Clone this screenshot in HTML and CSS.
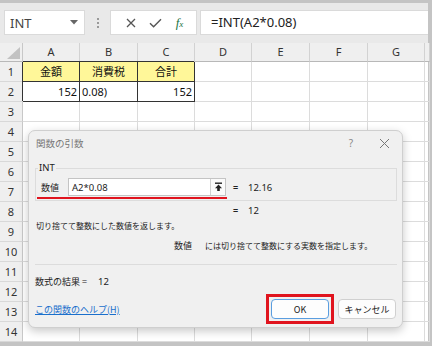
FILE: index.html
```html
<!DOCTYPE html>
<html lang="ja">
<head>
<meta charset="utf-8">
<link rel="stylesheet" href="styles.css">
</head>
<body>
<div class="app">
  <div class="toolbar">
    <div class="namebox"><span>INT</span>
      <svg class="dd" width="8" height="5" viewBox="0 0 8 5"><path d="M0 0h8L4 4.5z" fill="#666"/></svg>
    </div>
    <div class="grip"><i></i><i></i><i></i></div>
    <div class="fbtns">
      <svg width="10" height="10" viewBox="0 0 10 10"><path d="M1 1L9 9M9 1L1 9" stroke="#555" stroke-width="1.3" fill="none"/></svg>
      <svg width="13" height="10" viewBox="0 0 13 10"><path d="M1 5.2L4.6 8.8L12 1.2" stroke="#555" stroke-width="1.4" fill="none"/></svg>
      <span class="fx">f<span class="fxx">x</span></span>
    </div>
    <div class="formula">=INT(A2*0.08)</div>
  </div>
  <div class="sheet">
    <div class="corner"><span class="tri"></span></div><div class="ch">A</div><div class="ch">B</div><div class="ch">C</div><div class="ch">D</div><div class="ch">E</div><div class="ch">F</div><div class="ch">G</div><div class="ch"></div>
    <div class="rh">1</div><div class="c y b ctr">金額</div><div class="c y b ctr">消費税</div><div class="c y b ctr">合計</div><div class="c"></div><div class="c"></div><div class="c"></div><div class="c"></div><div class="c"></div>
    <div class="rh">2</div><div class="c b rt">152</div><div class="c b lt">0.08)</div><div class="c b rt">152</div><div class="c"></div><div class="c"></div><div class="c"></div><div class="c"></div><div class="c"></div>
    <div class="rh">3</div><div class="c"></div><div class="c"></div><div class="c"></div><div class="c"></div><div class="c"></div><div class="c"></div><div class="c"></div><div class="c"></div>
    <div class="rh">4</div><div class="c"></div><div class="c"></div><div class="c"></div><div class="c"></div><div class="c"></div><div class="c"></div><div class="c"></div><div class="c"></div>
    <div class="rh">5</div><div class="c"></div><div class="c"></div><div class="c"></div><div class="c"></div><div class="c"></div><div class="c"></div><div class="c"></div><div class="c"></div>
    <div class="rh">6</div><div class="c"></div><div class="c"></div><div class="c"></div><div class="c"></div><div class="c"></div><div class="c"></div><div class="c"></div><div class="c"></div>
    <div class="rh">7</div><div class="c"></div><div class="c"></div><div class="c"></div><div class="c"></div><div class="c"></div><div class="c"></div><div class="c"></div><div class="c"></div>
    <div class="rh">8</div><div class="c"></div><div class="c"></div><div class="c"></div><div class="c"></div><div class="c"></div><div class="c"></div><div class="c"></div><div class="c"></div>
    <div class="rh">9</div><div class="c"></div><div class="c"></div><div class="c"></div><div class="c"></div><div class="c"></div><div class="c"></div><div class="c"></div><div class="c"></div>
    <div class="rh">10</div><div class="c"></div><div class="c"></div><div class="c"></div><div class="c"></div><div class="c"></div><div class="c"></div><div class="c"></div><div class="c"></div>
    <div class="rh">11</div><div class="c"></div><div class="c"></div><div class="c"></div><div class="c"></div><div class="c"></div><div class="c"></div><div class="c"></div><div class="c"></div>
    <div class="rh">12</div><div class="c"></div><div class="c"></div><div class="c"></div><div class="c"></div><div class="c"></div><div class="c"></div><div class="c"></div><div class="c"></div>
    <div class="rh">13</div><div class="c"></div><div class="c"></div><div class="c"></div><div class="c"></div><div class="c"></div><div class="c"></div><div class="c"></div><div class="c"></div>
    <div class="rh">14</div><div class="c"></div><div class="c"></div><div class="c"></div><div class="c"></div><div class="c"></div><div class="c"></div><div class="c"></div><div class="c"></div>

    <div class="dialog">
      <div class="dlg-title">
        <span>関数の引数</span>
        <span class="help">?</span>
        <svg class="close" width="11" height="11" viewBox="0 0 11 11"><path d="M1 1L10 10M10 1L1 10" stroke="#777" stroke-width="1" fill="none"/></svg>
      </div>
      <fieldset class="group">
        <legend>INT</legend>
        <div class="argrow">
          <span class="arglabel">数値</span>
          <div class="arginput"><span class="argtext">A2*0.08</span>
            <span class="refbtn"><svg width="9" height="10" viewBox="0 0 9 10"><path d="M1 1.2h7" stroke="#222" stroke-width="1.4"/><path d="M4.5 2.5L1 6.2h2.2V9h2.6V6.2H8z" fill="#222"/></svg></span>
          </div>
          <span class="eq">=</span><span class="val">12.16</span>
        </div>
        <div class="redline"></div>
      </fieldset>
      <div class="resrow"><span class="eq">=</span><span class="val">12</span></div>
      <p class="desc">切り捨てて整数にした数値を返します。</p>
      <p class="argdesc"><span class="argname">数値</span>には切り捨てて整数にする実数を指定します。</p>
      <div class="sep"></div>
      <p class="result"><span>数式の結果 =</span><span class="resval">12</span></p>
      <div class="footer">
        <a class="helplink" href="#">この関数のヘルプ(H)</a>
        <div class="btns">
          <div class="mark"><button class="btn ok">OK</button></div>
          <button class="btn">キャンセル</button>
        </div>
      </div>
    </div>
  </div>
</div>
</body>
</html>
```
FILE: styles.css
```css
* { box-sizing: border-box; }
html, body { margin: 0; padding: 0; }
body {
  width: 432px;
  height: 346px;
  overflow: hidden;
  font-family: "Noto Sans", "Noto Sans CJK JP", sans-serif;
}
.app {
  width: 432px;
  height: 346px;
  background: #c4c4c4;
  padding: 3px 4px 4px 0;
  display: flex;
  flex-direction: column;
}
.toolbar {
  height: 40px;
  background: #e9e9e9;
  display: flex;
  align-items: flex-start;
  padding: 7px 0 0 4px;
}
.namebox {
  width: 81px;
  height: 25px;
  background: #fff;
  border: 1px solid #dadada;
  display: flex;
  align-items: center;
  justify-content: space-between;
  padding: 0 6px 0 5px;
  font-size: 13px;
  color: #444;
}
.grip {
  width: 25px;
  height: 25px;
  display: flex;
  flex-direction: column;
  align-items: center;
  justify-content: center;
  gap: 2px;
}
.grip i {
  display: block;
  width: 2px;
  height: 2px;
  background: #9a9a9a;
}
.fbtns {
  width: 87px;
  height: 25px;
  background: #fff;
  border: 1px solid #dadada;
  display: flex;
  align-items: center;
  justify-content: space-around;
  padding: 0 6px 0 8px;
}
.fx {
  font-family: "Liberation Serif", serif;
  font-style: italic;
  font-size: 13px;
  color: #217346;
  line-height: 1;
}
.fxx { font-size: 9px; }
.formula {
  flex: 1;
  margin-left: 3px;
  height: 25px;
  background: #fff;
  border: 1px solid #dadada;
  border-right: 0;
  font-size: 13px;
  line-height: 23px;
  padding-left: 10px;
  color: #222;
}
.sheet {
  position: relative;
  flex: 1;
  background: #fff;
  display: grid;
  grid-template-columns: 23px 57px 58px 57px 57px 58px 58px 57px 1fr;
  grid-template-rows: 19px repeat(14, 20px);
  font-family: "Noto Sans CJK JP", sans-serif;
  font-size: 11px;
}
.corner {
  background: #efefef;
  border-right: 1px solid #c8c8c8;
  border-bottom: 1px solid #b8b8b8;
  position: relative;
}
.tri {
  position: absolute;
  right: 2px;
  bottom: 2px;
  width: 0;
  height: 0;
  border-left: 13px solid transparent;
  border-bottom: 12px solid #c2c2c2;
}
.ch {
  background: #efefef;
  border-right: 1px solid #d2d2d2;
  border-bottom: 1px solid #b8b8b8;
  text-align: center;
  line-height: 18px;
  color: #333;
  font-family: "Noto Sans", sans-serif;
}
.rh {
  background: #efefef;
  border-right: 1px solid #c8c8c8;
  border-bottom: 1px solid #d8d8d8;
  text-align: center;
  line-height: 19px;
  color: #333;
  font-family: "Noto Sans", sans-serif;
}
.c {
  border-right: 1px solid #dcdcdc;
  border-bottom: 1px solid #dcdcdc;
  line-height: 19px;
  padding: 0 2px;
  color: #111;
  white-space: nowrap;
  overflow: hidden;
}
.y { background: #fff799; }
.b {
  border-right-color: #333;
  border-bottom-color: #333;
  box-shadow: -1px -1px 0 #333;
}
.ctr { text-align: center; }
.rt { text-align: right; font-family: "Noto Sans", sans-serif; }
.lt { text-align: left; font-family: "Noto Sans", sans-serif; }

.dialog {
  position: absolute;
  left: 28px;
  top: 87px;
  width: 375px;
  height: 198px;
  background: #f0f0f0;
  border: 1px solid #cfcfcf;
  border-radius: 7px;
  box-shadow: 0 3px 10px rgba(0,0,0,0.22);
  padding: 0 5px 0 6px;
  font-family: "Noto Sans CJK JP", sans-serif;
  font-size: 9px;
  color: #222;
  display: flex;
  flex-direction: column;
}
.dlg-title {
  height: 24px;
  display: flex;
  align-items: center;
  padding-left: 1px;
  font-size: 9.5px;
  color: #777;
}
.help {
  margin-left: auto;
  font-family: "Noto Sans", sans-serif;
  font-size: 10px;
  color: #888;
}
.close { margin: 0 7px 0 26px; }
.group {
  margin: 7px 0 0 0;
  border: 1px solid #dcdcdc;
  padding: 4px 5px 1px 5px;
  min-width: 0;
}
.group legend {
  padding: 0 1px;
  margin-left: -3px;
  font-family: "Noto Sans", sans-serif;
  font-size: 9.5px;
  line-height: 12px;
  color: #222;
}
.argrow {
  display: flex;
  align-items: center;
  height: 18px;
}
.arglabel { width: 27px; }
.arginput {
  width: 158px;
  height: 18px;
  background: #fff;
  border: 1px solid #c4c4c4;
  display: flex;
  align-items: center;
  justify-content: space-between;
  padding-left: 3px;
}
.argtext { font-family: "Noto Sans", sans-serif; font-size: 9.5px; }
.refbtn {
  width: 15px;
  height: 16px;
  border-left: 1px solid #d0d0d0;
  background: #fafafa;
  display: flex;
  align-items: center;
  justify-content: center;
}
.eq {
  margin-left: 7px;
  width: 15px;
  font-family: "Noto Sans", sans-serif;
  font-weight: bold;
  font-size: 9px;
}
.val { font-family: "Noto Sans", sans-serif; font-size: 9.5px; }
.redline {
  margin: 1px 0 0 -4px;
  width: 190px;
  height: 2px;
  background: #e0141e;
}
.resrow {
  margin-top: 2px;
  height: 14px;
  display: flex;
  align-items: center;
  padding-left: 198px;
}
.resrow .eq { margin-left: 0; }
.desc {
  margin: 2px 0 0 1px;
  height: 14px;
  line-height: 14px;
  font-size: 8px;
}
.argdesc {
  margin: 6px 0 0 139px;
  height: 14px;
  line-height: 14px;
  font-size: 8px;
}
.argname { font-size: 9px; margin-right: 13px; }
.sep {
  margin-top: 11px;
  border-top: 1px solid #dcdcdc;
}
.result {
  margin: 10px 0 0 0;
  height: 14px;
  line-height: 14px;
  font-size: 9px;
}
.resval {
  margin-left: 11px;
  font-family: "Noto Sans", sans-serif;
  font-size: 9.5px;
}
.footer {
  margin-top: 10px;
  display: flex;
  align-items: center;
  justify-content: space-between;
  padding-right: 1px;
}
.helplink {
  color: #1a6fcc;
  text-decoration: underline;
  font-size: 9px;
}
.btns { display: flex; align-items: center; gap: 4px; }
.mark {
  border: 3px solid #e0141e;
  padding: 2px;
  margin: -5px 0;
  display: flex;
}
.btn {
  width: 58px;
  height: 20px;
  padding: 0;
  background: #fdfdfd;
  border: 1px solid #d0d0d0;
  border-radius: 4px;
  font-family: "Noto Sans CJK JP", sans-serif;
  font-size: 9px;
  color: #222;
}
.btn.ok {
  border: 1.5px solid #5a9ee0;
}
```
